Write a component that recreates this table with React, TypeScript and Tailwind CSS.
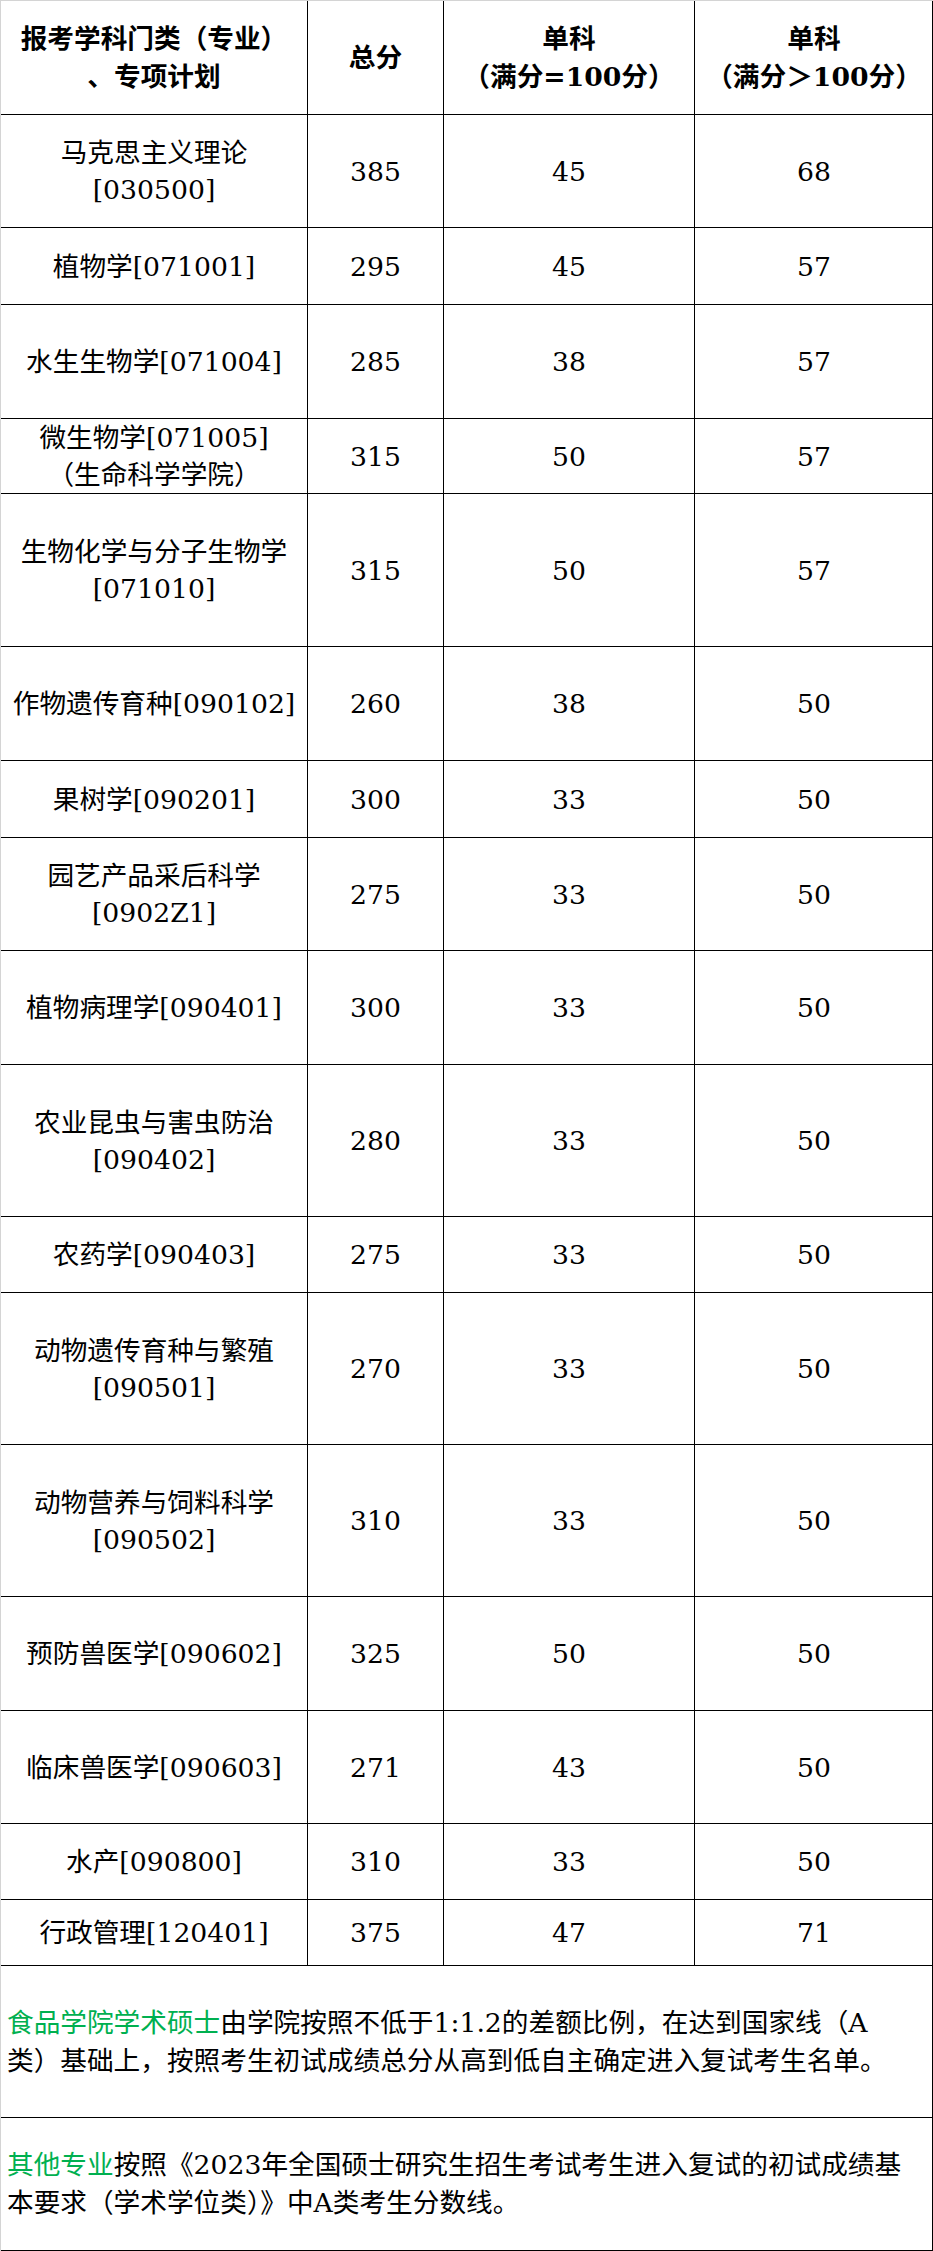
import React from "react"

interface Row {
  name: string[]
  total: string
  single: string
  singleOver: string
  h: string
}

// row heights include the 1px bottom rule
const rows: Row[] = [
  { name: ["马克思主义理论", "[030500]"], total: "385", single: "45", singleOver: "68", h: "h-[113px]" },
  { name: ["植物学[071001]"], total: "295", single: "45", singleOver: "57", h: "h-[77px]" },
  { name: ["水生生物学[071004]"], total: "285", single: "38", singleOver: "57", h: "h-[114px]" },
  { name: ["微生物学[071005]", "（生命科学学院）"], total: "315", single: "50", singleOver: "57", h: "h-[75px]" },
  { name: ["生物化学与分子生物学", "[071010]"], total: "315", single: "50", singleOver: "57", h: "h-[153px]" },
  { name: ["作物遗传育种[090102]"], total: "260", single: "38", singleOver: "50", h: "h-[114px]" },
  { name: ["果树学[090201]"], total: "300", single: "33", singleOver: "50", h: "h-[77px]" },
  { name: ["园艺产品采后科学", "[0902Z1]"], total: "275", single: "33", singleOver: "50", h: "h-[113px]" },
  { name: ["植物病理学[090401]"], total: "300", single: "33", singleOver: "50", h: "h-[114px]" },
  { name: ["农业昆虫与害虫防治", "[090402]"], total: "280", single: "33", singleOver: "50", h: "h-[152px]" },
  { name: ["农药学[090403]"], total: "275", single: "33", singleOver: "50", h: "h-[76px]" },
  { name: ["动物遗传育种与繁殖", "[090501]"], total: "270", single: "33", singleOver: "50", h: "h-[152px]" },
  { name: ["动物营养与饲料科学", "[090502]"], total: "310", single: "33", singleOver: "50", h: "h-[152px]" },
  { name: ["预防兽医学[090602]"], total: "325", single: "50", singleOver: "50", h: "h-[114px]" },
  { name: ["临床兽医学[090603]"], total: "271", single: "43", singleOver: "50", h: "h-[113px]" },
  { name: ["水产[090800]"], total: "310", single: "33", singleOver: "50", h: "h-[76px]" },
  { name: ["行政管理[120401]"], total: "375", single: "47", singleOver: "71", h: "h-[66px]" },
]

const Cell = ({ w, last, children }: { w: string; last?: boolean; children: React.ReactNode }) => (
  <div className={`${w} flex flex-col items-center justify-center text-center shrink-0 ${last ? "" : "border-r border-black"}`}>
    {children}
  </div>
)

export default function App() {
  return (
    <div
      className="w-[933px] bg-white text-black border-t border-l border-[#d4d4d4] text-[26.67px] leading-[37px]"
      style={{ fontFamily: '"DejaVu Serif", "Noto Sans CJK SC", serif' }}
    >
      {/* header */}
      <div className="flex h-[114px] border-b border-r border-black font-bold">
        <Cell w="w-[307px]">
          <div className="whitespace-nowrap leading-[38px]">报考学科门类（专业）</div>
          <div className="whitespace-nowrap leading-[38px]">、专项计划</div>
        </Cell>
        <Cell w="w-[136px]">
          <div>总分</div>
        </Cell>
        <Cell w="w-[251px]">
          <div className="leading-[38px]">单科</div>
          <div className="whitespace-nowrap leading-[38px]">（满分=100分）</div>
        </Cell>
        <Cell w="w-[238px]" last>
          <div className="leading-[38px]">单科</div>
          <div className="whitespace-nowrap leading-[38px]">（满分＞100分）</div>
        </Cell>
      </div>

      {rows.map((r) => (
        <div key={r.name[0]} className={`flex ${r.h} border-b border-r border-black`}>
          <Cell w="w-[307px]">
            {r.name.map((line) => (
              <div key={line} className="whitespace-nowrap">
                {line}
              </div>
            ))}
          </Cell>
          <Cell w="w-[136px]">{r.total}</Cell>
          <Cell w="w-[251px]">{r.single}</Cell>
          <Cell w="w-[238px]" last>
            {r.singleOver}
          </Cell>
        </div>
      ))}

      {/* notes */}
      <div className="flex h-[152px] items-center border-b border-r border-black pl-[6px] leading-[38px]">
        <p className="whitespace-nowrap">
          <span className="text-[#00b050]">食品学院学术硕士</span>由学院按照不低于1:1.2的差额比例，在达到国家线（A
          <br />
          类）基础上，按照考生初试成绩总分从高到低自主确定进入复试考生名单。
        </p>
      </div>
      <div className="flex h-[133px] items-center border-b border-r border-black pl-[6px] leading-[38px]">
        <p className="whitespace-nowrap">
          <span className="text-[#00b050]">其他专业</span>按照《2023年全国硕士研究生招生考试考生进入复试的初试成绩基
          <br />
          本要求（学术学位类）》中A类考生分数线。
        </p>
      </div>
    </div>
  )
}
